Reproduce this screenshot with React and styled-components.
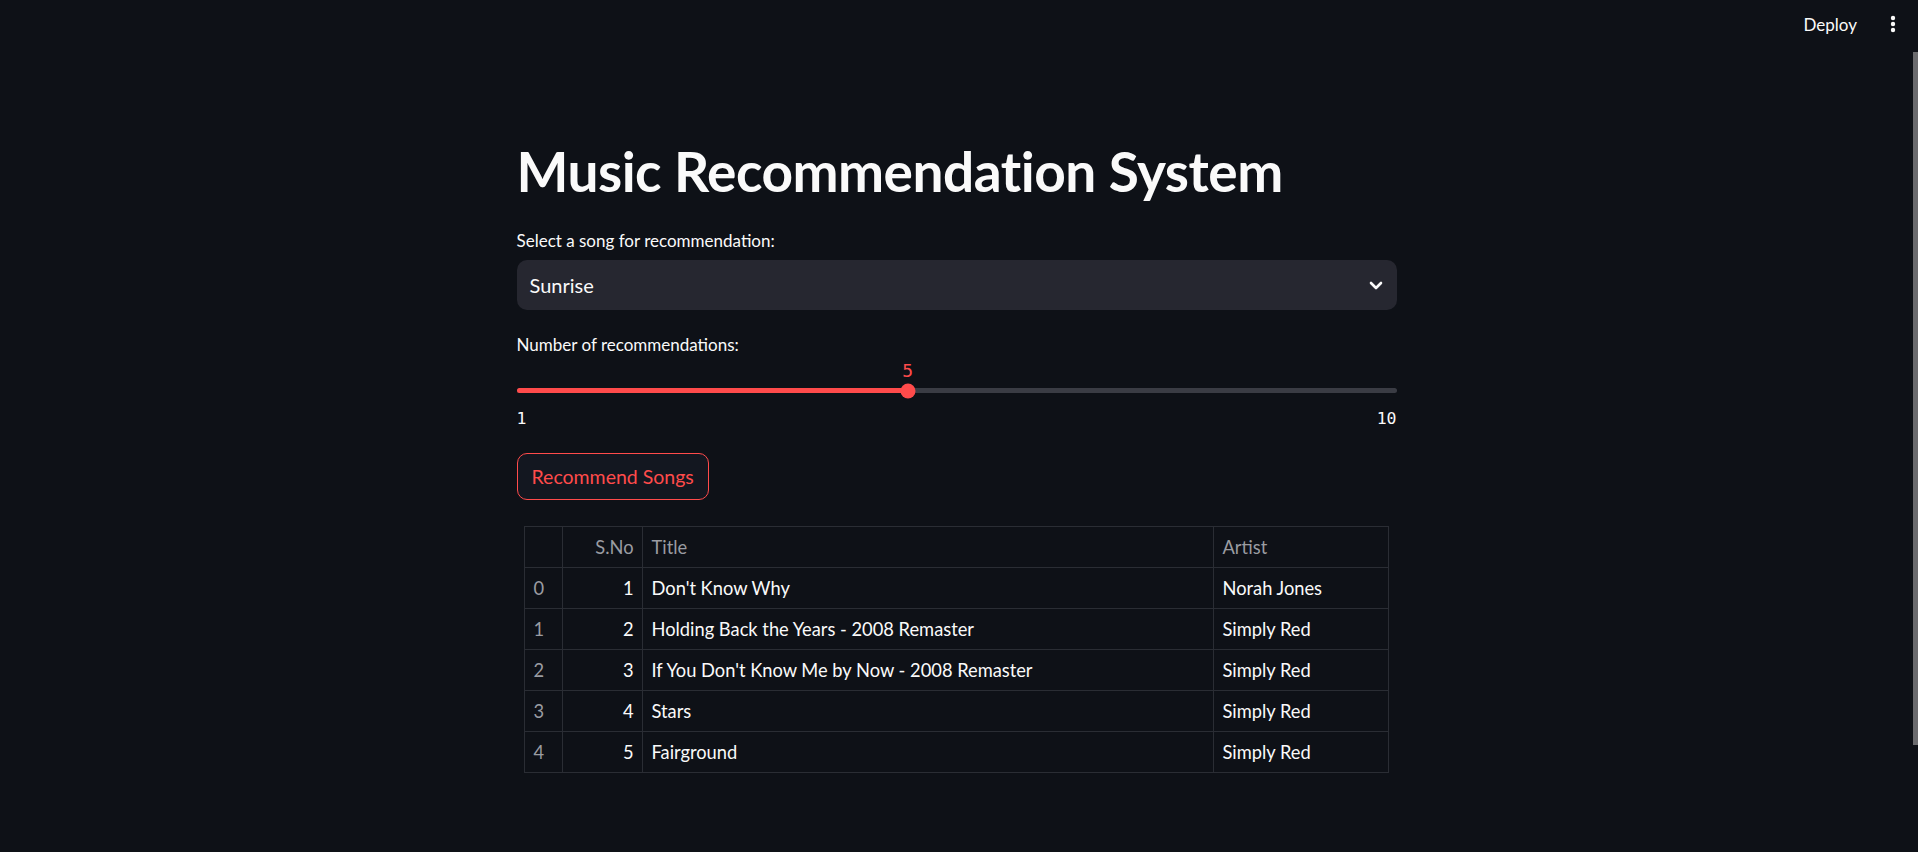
import React from 'react';
import styled, { createGlobalStyle } from 'styled-components';

const Global = createGlobalStyle`
  html, body { margin: 0; padding: 0; background: #0e1117; }
  body { font-family: Lato, "Noto Sans", sans-serif; color: #fafafa; overflow: hidden; }
  * { box-sizing: border-box; }
`;

const Page = styled.div`
  width: 1918px;
  height: 852px;
  display: flex;
  background: #0e1117;
`;

const Main = styled.div`
  flex: 1;
  display: flex;
  flex-direction: column;
`;

const ScrollTrack = styled.div`
  width: 5px;
  padding-top: 52px;
`;

const ScrollThumb = styled.div`
  height: 693px;
  background: #6b6b6e;
`;

const Header = styled.header`
  height: 48px;
  display: flex;
  align-items: center;
  justify-content: flex-end;
  padding-right: 8px;
  gap: 12px;
`;

const DeployButton = styled.button`
  background: transparent;
  border: none;
  color: #fafafa;
  font-family: inherit;
  font-size: 17px;
  padding: 0 12px;
  height: 40px;
`;

const MenuButton = styled.button`
  width: 24px;
  height: 40px;
  background: transparent;
  border: none;
  padding: 0;
  display: flex;
  align-items: center;
  justify-content: center;
`;

const Content = styled.div`
  width: 880px;
  margin: 0 auto;
  padding-top: 90px;
  display: flex;
  flex-direction: column;
`;

const Title = styled.h1`
  margin: 0;
  font-size: 55px;
  line-height: 66px;
  font-weight: 700;
  color: #fafafa;
  letter-spacing: -0.5px;
`;

const Label = styled.label`
  display: block;
  font-size: 17px;
  line-height: 28px;
  color: #fafafa;
  margin-top: ${(p) => p.$top}px;
  margin-bottom: 5px;
`;

const Select = styled.div`
  height: 50px;
  background: #262730;
  border-radius: 10px;
  display: flex;
  align-items: center;
  justify-content: space-between;
  padding: 0 14px 0 13px;
  font-size: 20px;
  color: #fafafa;
`;

const SliderBox = styled.div`
  position: relative;
  padding-top: 24px;
`;

const Track = styled.div`
  height: 5px;
  border-radius: 3px;
  background: #3a3c44;
  position: relative;
`;

const Fill = styled.div`
  height: 100%;
  border-radius: 3px;
  background: #ff4b4b;
`;

const Thumb = styled.div`
  position: absolute;
  top: 50%;
  width: 15px;
  height: 15px;
  border-radius: 50%;
  background: #ff4b4b;
  transform: translate(-50%, -50%);
`;

const ThumbValue = styled.div`
  position: absolute;
  bottom: 11px;
  transform: translateX(-50%);
  font-family: "DejaVu Sans Mono", "Liberation Mono", monospace;
  font-size: 18px;
  line-height: 22px;
  color: #ff4b4b;
`;

const Ticks = styled.div`
  margin-top: 16px;
  display: flex;
  justify-content: space-between;
  font-family: "DejaVu Sans Mono", "Liberation Mono", monospace;
  font-size: 16.5px;
  line-height: 20px;
  color: #fafafa;
`;

const Button = styled.button`
  align-self: flex-start;
  margin-top: 24px;
  height: 47px;
  padding: 0 14px;
  background: #131720;
  border: 1px solid #ff4b4b;
  border-radius: 10px;
  color: #ff4b4b;
  font-family: inherit;
  font-size: 19.5px;
`;

const Table = styled.table`
  margin: 26px 9px 0 7px;
  width: 864px;
  border-collapse: collapse;
  table-layout: fixed;
  font-size: 18.3px;
`;

const Cell = styled.td`
  height: 41px;
  padding: 0 ${(p) => (p.$right ? 8 : 9)}px 0 9px;
  border: 1px solid #2a2d34;
  text-align: ${(p) => (p.$right ? 'right' : 'left')};
  color: ${(p) => (p.$muted ? '#9a9ca2' : '#fafafa')};
  white-space: nowrap;
  overflow: hidden;
`;

const HeadCell = styled(Cell).attrs({ as: 'th' })`
  font-weight: 400;
  color: #9a9ca2;
`;

const Dots = () => (
  <svg width="6" height="18" viewBox="0 0 6 18">
    <circle cx="3" cy="3" r="2.2" fill="#fafafa" />
    <circle cx="3" cy="9" r="2.2" fill="#fafafa" />
    <circle cx="3" cy="15" r="2.2" fill="#fafafa" />
  </svg>
);

const Chevron = () => (
  <svg width="14" height="9" viewBox="0 0 14 9">
    <path d="M2 2 L7 7 L12 2" stroke="#fafafa" strokeWidth="2.6" fill="none" strokeLinecap="round" strokeLinejoin="round" />
  </svg>
);

const rows = [
  [1, "Don't Know Why", 'Norah Jones'],
  [2, 'Holding Back the Years - 2008 Remaster', 'Simply Red'],
  [3, "If You Don't Know Me by Now - 2008 Remaster", 'Simply Red'],
  [4, 'Stars', 'Simply Red'],
  [5, 'Fairground', 'Simply Red'],
];

export default function App() {
  const min = 1, max = 10, value = 5;
  const pct = ((value - min) / (max - min)) * 100;
  return (
    <>
      <Global />
      <Page>
        <Main>
          <Header>
            <DeployButton>Deploy</DeployButton>
            <MenuButton><Dots /></MenuButton>
          </Header>
          <Content>
            <Title>Music Recommendation System</Title>
            <Label $top={23}>Select a song for recommendation:</Label>
            <Select>
              <span>Sunrise</span>
              <Chevron />
            </Select>
            <Label $top={21}>Number of recommendations:</Label>
            <SliderBox>
              <Track>
                <Fill style={{ width: `${pct}%` }} />
                <Thumb style={{ left: `${pct}%` }} />
                <ThumbValue style={{ left: `${pct}%` }}>{value}</ThumbValue>
              </Track>
            </SliderBox>
            <Ticks>
              <span>{min}</span>
              <span>{max}</span>
            </Ticks>
            <Button>Recommend Songs</Button>
            <Table>
              <colgroup>
                <col style={{ width: 38 }} />
                <col style={{ width: 80 }} />
                <col style={{ width: 571 }} />
                <col style={{ width: 175 }} />
              </colgroup>
              <thead>
                <tr>
                  <HeadCell />
                  <HeadCell $right>S.No</HeadCell>
                  <HeadCell>Title</HeadCell>
                  <HeadCell>Artist</HeadCell>
                </tr>
              </thead>
              <tbody>
                {rows.map((r, i) => (
                  <tr key={i}>
                    <Cell $muted>{i}</Cell>
                    <Cell $right>{r[0]}</Cell>
                    <Cell>{r[1]}</Cell>
                    <Cell>{r[2]}</Cell>
                  </tr>
                ))}
              </tbody>
            </Table>
          </Content>
        </Main>
        <ScrollTrack>
          <ScrollThumb />
        </ScrollTrack>
      </Page>
    </>
  );
}
